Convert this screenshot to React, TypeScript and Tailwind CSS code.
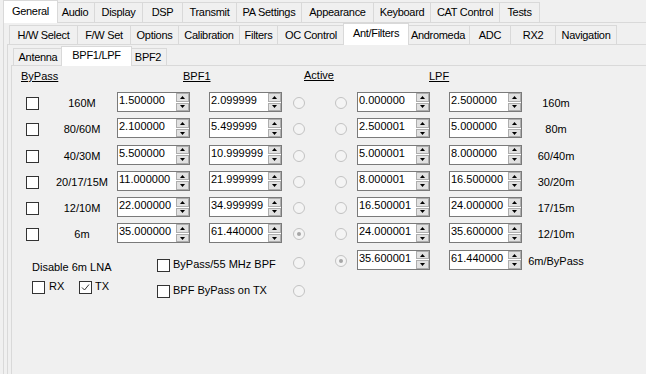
import React from 'react';

type Tab = { label: string; w: number };

const mainTabs: Tab[] = [
    { label: 'General', w: 51 },
    { label: 'Audio', w: 39 },
    { label: 'Display', w: 48 },
    { label: 'DSP', w: 40 },
    { label: 'Transmit', w: 54 },
    { label: 'PA Settings', w: 65 },
    { label: 'Appearance', w: 72 },
    { label: 'Keyboard', w: 57 },
    { label: 'CAT Control', w: 69 },
    { label: 'Tests', w: 40 },
];

const generalTabs: Tab[] = [
    { label: 'H/W Select', w: 69 },
    { label: 'F/W Set', w: 53 },
    { label: 'Options', w: 48 },
    { label: 'Calibration', w: 61 },
    { label: 'Filters', w: 38 },
    { label: 'OC Control', w: 67 },
    { label: 'Ant/Filters', w: 62 },
    { label: 'Andromeda', w: 63 },
    { label: 'ADC', w: 41 },
    { label: 'RX2', w: 45 },
    { label: 'Navigation', w: 61 },
];

const filterTabs: Tab[] = [
    { label: 'Antenna', w: 50 },
    { label: 'BPF1/LPF', w: 67 },
    { label: 'BPF2', w: 37 },
];

const bpf = [
    { band: '160M', low: '1.500000', high: '2.099999' },
    { band: '80/60M', low: '2.100000', high: '5.499999' },
    { band: '40/30M', low: '5.500000', high: '10.999999' },
    { band: '20/17/15M', low: '11.000000', high: '21.999999' },
    { band: '12/10M', low: '22.000000', high: '34.999999' },
    { band: '6m', low: '35.000000', high: '61.440000' },
];

const lpf = [
    { low: '0.000000', high: '2.500000', band: '160m' },
    { low: '2.500001', high: '5.000000', band: '80m' },
    { low: '5.000001', high: '8.000000', band: '60/40m' },
    { low: '8.000001', high: '16.500000', band: '30/20m' },
    { low: '16.500001', high: '24.000000', band: '17/15m' },
    { low: '24.000001', high: '35.600000', band: '12/10m' },
    { low: '35.600001', high: '61.440000', band: '6m/ByPass' },
];

function TabStrip({ tabs, selected, normalH, strip }: { tabs: Tab[]; selected: string; normalH: number; strip: string }) {
    return (
        <div className={`flex items-end pl-[2px] shrink-0 ${strip}`}>
            {tabs.map((t, i) => {
                const active = t.label === selected;
                return (
                    <div
                        key={t.label}
                        style={{ width: active ? t.w + 4 : t.w, height: active ? undefined : normalH }}
                        className={
                            active
                                ? 'relative z-10 -mx-[2px] -mb-px self-stretch border border-b-0 border-[#d9d9d9] bg-white flex items-center justify-center pb-[2px] tracking-[-0.3px] whitespace-nowrap'
                                : `border-t border-r border-[#d9d9d9] bg-[#f0f0f0] flex items-center justify-center tracking-[-0.3px] whitespace-nowrap ${i === 0 ? 'border-l' : ''}`
                        }
                    >
                        {t.label}
                    </div>
                );
            })}
        </div>
    );
}

function Spin({ value }: { value: string }) {
    return (
        <div className="w-[73px] h-[20px] border border-[#7a7a7a] bg-white flex shrink-0">
            <div className="flex-1 pl-[1px] pt-[1px] leading-[13px]">{value}</div>
            <div className="w-[13px] flex flex-col gap-[1px]">
                <div className="flex-1 border border-[#adadad] bg-[#e1e1e1] flex items-center justify-center">
                    <svg width="5" height="3" viewBox="0 0 5 3"><polygon points="2.5,0 5,3 0,3" fill="#000" /></svg>
                </div>
                <div className="flex-1 border border-[#adadad] bg-[#e1e1e1] flex items-center justify-center">
                    <svg width="5" height="3" viewBox="0 0 5 3"><polygon points="0,0 5,0 2.5,3" fill="#000" /></svg>
                </div>
            </div>
        </div>
    );
}

function Radio({ checked = false, className = '' }: { checked?: boolean; className?: string }) {
    return (
        <div className={`w-[12px] h-[12px] rounded-full border border-[#c2c2c2] bg-[#f4f4f4] flex items-center justify-center shrink-0 ${className}`}>
            {checked && <div className="w-[4px] h-[4px] rounded-full bg-[#a6a6a6]" />}
        </div>
    );
}

function Check({ checked = false, className = '' }: { checked?: boolean; className?: string }) {
    return (
        <div className={`w-[13px] h-[13px] border border-[#333333] bg-white shrink-0 ${className}`}>
            {checked && (
                <svg width="11" height="11" viewBox="0 0 11 11">
                    <polyline points="2,5.5 4.5,8 9,2.5" fill="none" stroke="#333333" strokeWidth="1" />
                </svg>
            )}
        </div>
    );
}

export default function App() {
    return (
        <div className="w-[646px] h-[374px] overflow-hidden bg-[#f0f0f0] font-['Liberation_Sans',Arial,sans-serif] text-[11px] leading-[13px] text-black">
            <div className="w-[680px] h-[400px] pl-[3px] flex flex-col">
                <TabStrip tabs={mainTabs} selected="General" normalH={20} strip="h-[22px]" />
                <div className="flex-1 border border-[#d9d9d9] bg-[#f0f0f0] pl-[3px] flex flex-col">
                    <TabStrip tabs={generalTabs} selected="Ant/Filters" normalH={19} strip="h-[21px]" />
                    <div className="flex-1 border border-[#d9d9d9] bg-[#f0f0f0] pl-[3px] pt-[1px] flex flex-col">
                        <TabStrip tabs={filterTabs} selected="BPF1/LPF" normalH={17} strip="h-[19px]" />
                        <div className="flex-1 border border-[#d9d9d9] bg-[#f0f0f0] flex flex-col">
                            {/* column headers */}
                            <div className="flex mt-[4px] h-[13px]">
                                <span className="ml-[9px] w-[162px] underline">ByPass</span>
                                <span className="w-[121px] underline">BPF1</span>
                                <span className="w-[125px] underline -mt-[1px]">Active</span>
                                <span className="underline">LPF</span>
                            </div>

                            <div className="mt-[9px] flex flex-col">
                                {bpf.map((row, i) => (
                                    <div key={row.band} className="h-[26.3px] flex items-start">
                                        <Check className="ml-[14px] mt-[5px]" />
                                        <div className="w-[78px] pl-[8px] text-center mt-[5px] whitespace-nowrap">{row.band}</div>
                                        <Spin value={row.low} />
                                        <div className="ml-[19px]"><Spin value={row.high} /></div>
                                        <Radio className="ml-[11px] mt-[5px]" checked={i === 5} />
                                        <Radio className="ml-[30px] mt-[5px]" />
                                        <div className="ml-[10px]"><Spin value={lpf[i].low} /></div>
                                        <div className="ml-[19px]"><Spin value={lpf[i].high} /></div>
                                        <div className="w-[68px] text-center mt-[5px] whitespace-nowrap">{lpf[i].band}</div>
                                    </div>
                                ))}

                                <div className="flex items-start">
                                    <div className="ml-[20px] w-[125px] flex flex-col">
                                        <div className="mt-[11px] whitespace-nowrap">Disable 6m LNA</div>
                                        <div className="mt-[7px] flex items-center">
                                            <Check />
                                            <span className="ml-[4px] w-[16px] relative -top-px">RX</span>
                                            <Check className="ml-[14px]" checked />
                                            <span className="ml-[3px] relative -top-px">TX</span>
                                        </div>
                                    </div>
                                    <div className="w-[136px] flex flex-col">
                                        <div className="mt-[9px] h-[13px] flex items-center">
                                            <Check />
                                            <span className="ml-[3px] whitespace-nowrap relative -top-px">ByPass/55 MHz BPF</span>
                                        </div>
                                        <div className="mt-[13px] h-[13px] flex items-center">
                                            <Check />
                                            <span className="ml-[3px] whitespace-nowrap relative -top-px">BPF ByPass on TX</span>
                                        </div>
                                    </div>
                                    <div className="w-[12px] flex flex-col">
                                        <Radio className="mt-[7px]" />
                                        <Radio className="mt-[16px]" />
                                    </div>
                                    <Radio className="ml-[30px] mt-[5px]" checked />
                                    <div className="ml-[10px]"><Spin value={lpf[6].low} /></div>
                                    <div className="ml-[19px]"><Spin value={lpf[6].high} /></div>
                                    <div className="w-[68px] text-center mt-[5px] whitespace-nowrap">{lpf[6].band}</div>
                                </div>
                            </div>
                        </div>
                    </div>
                </div>
            </div>
        </div>
    );
}
